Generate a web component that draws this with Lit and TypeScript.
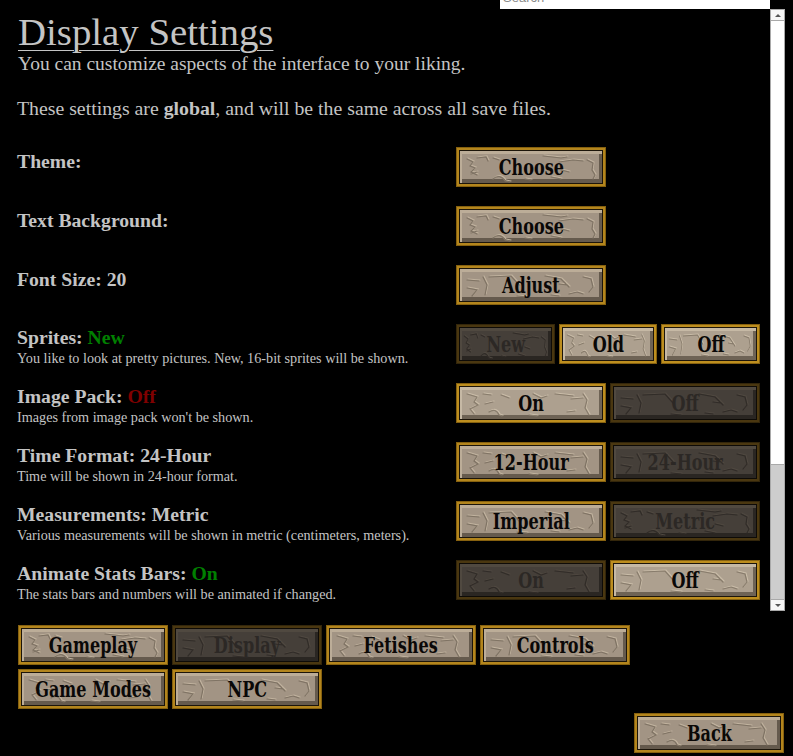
import { LitElement, html, css, svg } from "lit";
import { customElement, property } from "lit/decorators.js";

const CRACKS: string[][] = [
  ["M8 9l6 3-3 4 5 2-4 4 6 3M12 24l6-2M18 8l9-1 2 4M34 8l6 2", "M34 29c4-4 9-3 12 2l5 1M84 6l18 2 6-1M100 12l14-2 10 1M102 20l8 2M92 27l10 2M128 10l6 3-1 7 3 5-2 4M66 29l6 1"],
  ["M8 8l10 3-3 5 4 3-8 4 4 5M24 8l8 1M42 9l8 3M26 18l8-2", "M30 26c4-3 8-2 10 3l3 1M74 8l8 4 6-2M96 8l18 2M112 13l12-1M124 8l4 6-2 8 4 7M108 26l8-1M70 29l8 1"],
  ["M8 12l12 1M8 20l10 2-5 6M24 9l4 8-2 10M30 9l22-1 8 9M58 28l10 1", "M86 8l16 3 8 8M110 26l8-2 6 2M124 9l8 2 2 8-4 5M100 16l8 1M92 27l8 1"],
];

@customElement("stone-btn")
class StoneBtn extends LitElement {
  @property() label = "";
  @property({ type: Number }) v = 0;
  @property({ reflect: true }) tone: "" | "lit" | "off" = "";
  static styles = css`
    :host { display: block; height: 40px; min-width: 0; }
    .btn {
      box-sizing: border-box; position: relative; height: 40px; overflow: hidden;
      display: flex; align-items: center; justify-content: center;
      border: 3px solid #b3851d; outline: 1px solid #86610f; outline-offset: -1px;
      background: #a29484; color: #0a0807;
      box-shadow: inset 0 0 0 1px #1c150a, inset 2px 3px 0 1px #bcad98, inset -3px -4px 0 1px #655a4d;
    }
    .lit { background: #ada08f; border-color: #bd8e1f;
      box-shadow: inset 0 0 0 1px #1c150a, inset 2px 3px 0 1px #c6b9a5, inset -3px -4px 0 1px #6e6355; }
    .off { background: #453f39; border-color: #4a3710; outline-color: #33260b; color: #2c2825;
      box-shadow: inset 0 0 0 1px #0e0b07, inset 2px 3px 0 1px #504940, inset -3px -4px 0 1px #2a2622; }
    svg { position: absolute; inset: 0; width: 100%; height: 100%; filter: blur(0.4px); }
    .d { fill: none; stroke: #7f7364; stroke-width: 1.2; stroke-linecap: round; }
    .l { fill: none; stroke: #c0b29e; stroke-width: 1.2; stroke-linecap: round; }
    .off .d { stroke: #312c28; }
    .off .l { stroke: #4f4840; }
    .lit .d { stroke: #887c6c; }
    .lit .l { stroke: #c9bca8; }
    span {
      position: relative; display: inline-block; white-space: nowrap;
      font: bold 21px/1 "DejaVu Serif Condensed", "Liberation Serif", serif;
      transform: translateY(-1px) scale(0.85, 1.1);
    }
  `;
  render() {
    const [d, l] = CRACKS[this.v % CRACKS.length];
    return html`<div class="btn ${this.tone}">
      <svg viewBox="0 0 144 34" preserveAspectRatio="none" aria-hidden="true">
        ${svg`<path class="l" d=${d} transform="translate(1 -1)" /><path class="l" d=${l} transform="translate(1 -1)" /><path class="d" d=${d} /><path class="d" d=${l} />`}
      </svg>
      <span>${this.label}</span>
    </div>`;
  }
}

type Opt = { label: string; tone?: "" | "lit" | "off"; v?: number };
type Row = { title: string; value?: string; color?: string; desc?: string; opts: Opt[] };

const ROWS: Row[] = [
  { title: "Theme:", opts: [{ label: "Choose" }] },
  { title: "Text Background:", opts: [{ label: "Choose" }] },
  { title: "Font Size: 20", opts: [{ label: "Adjust", v: 2 }] },
  {
    title: "Sprites:", value: "New", color: "green",
    desc: "You like to look at pretty pictures. New, 16-bit sprites will be shown.",
    opts: [{ label: "New", tone: "off" }, { label: "Old", tone: "lit", v: 1 }, { label: "Off", tone: "lit", v: 2 }],
  },
  {
    title: "Image Pack:", value: "Off", color: "red",
    desc: "Images from image pack won't be shown.",
    opts: [{ label: "On", tone: "lit", v: 1 }, { label: "Off", tone: "off", v: 2 }],
  },
  {
    title: "Time Format: 24-Hour",
    desc: "Time will be shown in 24-hour format.",
    opts: [{ label: "12-Hour", v: 1 }, { label: "24-Hour", tone: "off", v: 2 }],
  },
  {
    title: "Measurements: Metric",
    desc: "Various measurements will be shown in metric (centimeters, meters).",
    opts: [{ label: "Imperial", v: 2 }, { label: "Metric", tone: "off" }],
  },
  {
    title: "Animate Stats Bars:", value: "On", color: "green",
    desc: "The stats bars and numbers will be animated if changed.",
    opts: [{ label: "On", tone: "off", v: 1 }, { label: "Off", tone: "lit", v: 2 }],
  },
];

const NAV: Opt[] = [
  { label: "Gameplay" }, { label: "Display", tone: "off", v: 2 }, { label: "Fetishes", v: 1 },
  { label: "Controls", v: 2 }, { label: "Game Modes", v: 1 }, { label: "NPC", v: 2 },
];

@customElement("app-root")
class AppRoot extends LitElement {
  static styles = css`
    :host {
      display: block; position: relative; width: 793px; height: 756px; overflow: hidden;
      background: #000; color: #c4c4c4; font-family: "Liberation Serif", "Times New Roman", serif;
    }
    .search {
      position: absolute; left: 500px; top: 0; width: 270px; height: 9px; background: #fff;
      overflow: hidden; color: #8a8a8a; font: 13px/1 "Liberation Sans", sans-serif; padding-left: 3px; box-sizing: border-box;
    }
    .search div { margin-top: -9px; }
    .main { display: flex; height: 611px; padding-right: 8px; }
    .content { width: 770px; box-sizing: border-box; padding: 11px 0 0 17px; font-size: 20px; line-height: 23px; }
    h1 { margin: 0 0 0 1px; font-size: 38.8px; font-weight: 400; line-height: 41px; width: 256px; white-space: nowrap; text-decoration: underline; text-decoration-thickness: 1px; text-underline-offset: 5px; }
    .p { margin: 0; white-space: nowrap; }
    .p1 { font-size: 19.5px; margin-left: 1px; }
    .p2 { font-size: 19.8px; margin: 22px 0 0 0; }
    .rows { display: grid; gap: 19px; margin-top: 27px; }
    .row { display: grid; grid-template-columns: 439px 304px; height: 40px; }
    .t { font-size: 19.7px; font-weight: 700; line-height: 23px; white-space: nowrap; margin-top: 2px; }
    .row.plain .t { margin-top: 3px; }
    .d { font-size: 14.2px; line-height: 16px; white-space: nowrap; margin-top: 1px; }
    .green { color: #008000; }
    .red { color: #800000; }
    .opts { display: flex; gap: 4px; }
    .opts stone-btn { flex: 1; }
    .opts.one stone-btn { flex: 0 0 150px; }
    .sb { width: 15px; margin-top: 9px; height: 602px; box-sizing: border-box; display: flex; flex-direction: column; background: #cdcdcd; border: 1px solid #a9a9a9; border-width: 0 1px; }
    .arrow { height: 10px; flex: none; background: #f6f6f6; border: 1px solid #a9a9a9; margin: 0 -1px; display: flex; align-items: center; justify-content: center; }
    .arrow i { width: 0; height: 0; border: 3px solid transparent; }
    .arrow.up i { border-bottom: 3px solid #555; border-top: 0; }
    .arrow.dn i { border-top: 3px solid #555; border-bottom: 0; }
    .thumb { height: 443px; flex: none; background: #fff; border-bottom: 1px solid #a9a9a9; }
    .track { flex: 1; }
    .nav { display: grid; grid-template-columns: repeat(4, 150px); gap: 4px; padding: 14px 0 0 18px; }
    .back { display: flex; justify-content: flex-end; padding: 4px 9px 0 0; }
    .back stone-btn { width: 150px; }
  `;
  render() {
    return html`
      <div class="search"><div>Search</div></div>
      <div class="main">
        <div class="content">
          <h1>Display Settings</h1>
          <p class="p p1">You can customize aspects of the interface to your liking.</p>
          <p class="p p2">These settings are <b>global</b>, and will be the same across all save files.</p>
          <div class="rows">
            ${ROWS.map((r) => html`
              <div class="row ${r.desc ? "" : "plain"}">
                <div>
                  <div class="t">${r.title}${r.value ? html` <span class=${r.color}>${r.value}</span>` : ""}</div>
                  ${r.desc ? html`<div class="d">${r.desc}</div>` : ""}
                </div>
                <div class="opts ${r.opts.length === 1 ? "one" : ""}">
                  ${r.opts.map((o) => html`<stone-btn .label=${o.label} .tone=${o.tone ?? ""} .v=${o.v ?? 0}></stone-btn>`)}
                </div>
              </div>`)}
          </div>
        </div>
        <div class="sb">
          <div class="arrow up"><i></i></div>
          <div class="thumb"></div>
          <div class="track"></div>
          <div class="arrow dn"><i></i></div>
        </div>
      </div>
      <div class="nav">
        ${NAV.map((o) => html`<stone-btn .label=${o.label} .tone=${o.tone ?? ""} .v=${o.v ?? 0}></stone-btn>`)}
      </div>
      <div class="back"><stone-btn label="Back" .v=${1}></stone-btn></div>
    `;
  }
}
